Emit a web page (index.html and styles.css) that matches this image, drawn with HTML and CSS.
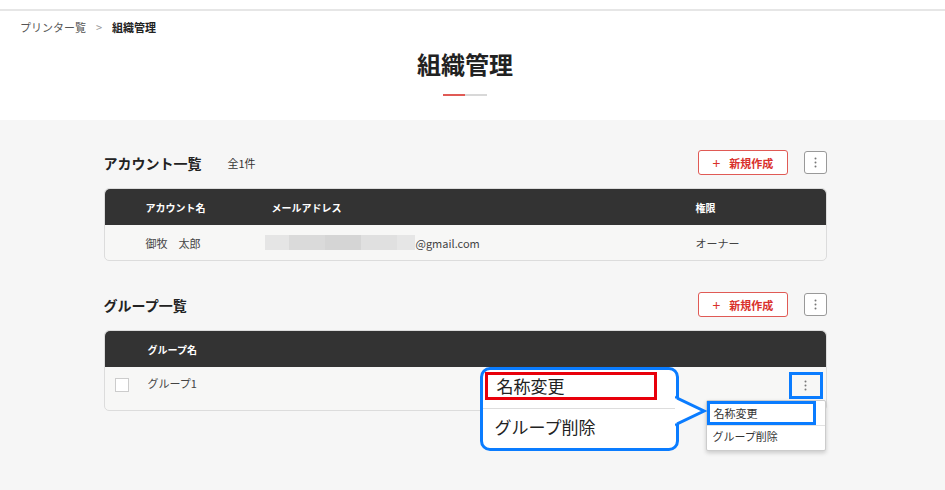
FILE: index.html
```html
<!DOCTYPE html>
<html>
<head>
<meta charset="utf-8">
<title>組織管理</title>
<link rel="stylesheet" href="styles.css">
</head>
<body>

<div class="topbar"></div>

<div class="header">
  <div class="crumbs">
    <a class="crumb" href="#">プリンター覧</a>
    <span class="sep">&gt;</span>
    <span class="crumb current">組織管理</span>
  </div>
  <h1 class="title">組織管理</h1>
  <div class="title-bar"><span class="red"></span><span class="gray"></span></div>
</div>

<div class="main">
  <div class="wrap">

    <div class="sec-head">
      <h2 class="sec-title">アカウント一覧</h2>
      <span class="count">全1件</span>
      <button class="btn-new"><span class="plus">+</span>新規作成</button>
      <button class="btn-more">
        <svg width="3" height="11" viewBox="0 0 3 11"><circle cx="1.5" cy="1.5" r="1" fill="#777"/><circle cx="1.5" cy="5.5" r="1" fill="#777"/><circle cx="1.5" cy="9.5" r="1" fill="#777"/></svg>
      </button>
    </div>

    <div class="table">
      <div class="thead acc-cols">
        <span>アカウント名</span>
        <span>メールアドレス</span>
        <span>権限</span>
      </div>
      <div class="trow acc-cols">
        <span>御牧　太郎</span>
        <span class="mail">
          <span class="blur">
            <i style="width:24px;background:#e5e5e5"></i><i style="width:36px;background:#dadada"></i><i style="width:36px;background:#d5d5d5"></i><i style="width:36px;background:#e0e0e0"></i><i style="width:18px;background:#e6e6e6"></i>
          </span>@gmail.com
        </span>
        <span>オーナー</span>
      </div>
    </div>

    <div class="sec-head second">
      <h2 class="sec-title">グループ一覧</h2>
      <button class="btn-new"><span class="plus">+</span>新規作成</button>
      <button class="btn-more">
        <svg width="3" height="11" viewBox="0 0 3 11"><circle cx="1.5" cy="1.5" r="1" fill="#777"/><circle cx="1.5" cy="5.5" r="1" fill="#777"/><circle cx="1.5" cy="9.5" r="1" fill="#777"/></svg>
      </button>
    </div>

    <div class="table group">
      <div class="thead grp-cols">
        <span></span>
        <span>グループ名</span>
      </div>
      <div class="trow grp-cols tall">
        <span class="check"></span>
        <span>グループ1</span>
        <span class="row-more">
          <svg width="3" height="11" viewBox="0 0 3 11"><circle cx="1.5" cy="1.5" r="1" fill="#777"/><circle cx="1.5" cy="5.5" r="1" fill="#777"/><circle cx="1.5" cy="9.5" r="1" fill="#777"/></svg>
        </span>
      </div>

      <div class="menu">
        <div class="menu-item hl">名称変更</div>
        <div class="menu-item">グループ削除</div>
      </div>

      <div class="callout">
        <div class="callout-item boxed">名称変更</div>
        <div class="callout-item">グループ削除</div>
        <svg class="callout-tail" width="32" height="34" viewBox="0 0 32 34">
          <path d="M0 3 L29 17 L0 31" fill="#fff" stroke="#0a7cff" stroke-width="3" stroke-linejoin="miter"/>
          <rect x="-2" y="4.5" width="3.5" height="25" fill="#fff"/>
        </svg>
      </div>
    </div>

  </div>
</div>

</body>
</html>
```

FILE: styles.css
```css
* { box-sizing: border-box; }

html, body { min-height: 100%; }
body { margin: 0; background: #f6f6f6; color: #333;
  font-family: "Noto Sans CJK JP", "Noto Sans", sans-serif; }

.topbar { height: 11px; background: #fff; border-bottom: 2px solid #e6e6e6; }

.header { background: #fff; height: 109px; }

.crumbs { display: flex; align-items: center; gap: 10px; padding: 8px 0 0 20px;
  font-size: 11px; height: 24px; }
.crumb { color: #555; text-decoration: none; }
.crumb.current { color: #222; font-weight: bold; }
.sep { color: #999; font-size: 11px; }

.header .title, .header .title-bar { width: 930px; }
.title { margin: 12px 0 0; text-align: center; font-size: 24px; line-height: 34px;
  font-weight: bold; color: #222; }

.title-bar { display: flex; justify-content: center; margin-top: 13px; }
.title-bar span { display: block; width: 22px; height: 2px; }
.title-bar .red { background: #e05a55; }
.title-bar .gray { background: #d8d8d8; }

.main { width: 930px; min-height: 370px; padding-bottom: 80px; }
.wrap { width: 723px; margin: 0 auto; padding-top: 30px; }

.sec-head { display: flex; align-items: center; height: 25px; }
.sec-head.second { margin-top: 31px; }
.sec-title { margin: 0; font-size: 14px; font-weight: bold; color: #222; }
.count { margin-left: 26px; font-size: 11px; color: #333; }

.btn-new { margin-left: auto; width: 90px; height: 25px; border: 1px solid #e05a55;
  border-radius: 3px; background: #fff; color: #d9302b; font: bold 11px "Noto Sans CJK JP", sans-serif;
  display: flex; align-items: center; padding: 0 0 0 14px; }
.btn-new .plus { font-weight: normal; font-size: 14px; margin-right: 9px; line-height: 1; }

.btn-more { margin-left: 16px; width: 23px; height: 23px; border: 1px solid #999;
  border-radius: 3px; background: #fff; display: flex; align-items: center;
  justify-content: center; padding: 0; }

.table { margin-top: 13px; border: 1px solid #dcdcdc; border-radius: 5px;
  background: #f7f7f6; position: relative; }

.thead { background: #333; color: #fff; font-size: 10px; font-weight: bold; height: 36px;
  border-radius: 5px 5px 0 0; align-items: center; }
.trow { height: 35px; font-size: 11px; color: #444; align-items: center; }
.trow.tall { height: 43px; align-items: flex-start; padding-top: 8px; }

.acc-cols { display: grid; grid-template-columns: 126px 424px 1fr; padding-left: 41px; }
.grp-cols { display: grid; grid-template-columns: 33px 1fr 40px; padding-left: 10px; }

.mail { display: flex; align-items: center; margin-left: -7px; }
.blur { display: flex; height: 15px; margin-right: 1px; }
.blur i { display: block; height: 15px; }

.check { width: 14px; height: 14px; border: 1px solid #ccc; background: #fff; margin-top: 3px; }

.row-more { width: 34px; height: 27px; border: 3px solid #0a7cff; display: flex;
  align-items: center; justify-content: center; margin-top: -3px; margin-left: 3px; }

.menu { position: absolute; left: 601px; top: 69px; width: 120px; background: #fff;
  border: 1px solid #ccc; border-radius: 2px; box-shadow: 0 2px 4px rgba(0,0,0,0.18);
  font-size: 11px; color: #333; z-index: 2; }
.menu-item { height: 25px; line-height: 21px; padding-left: 6px; }
.menu-item.hl { width: 109px; border: 3px solid #0a7cff; height: 24px; line-height: 18px; padding-left: 4px; }
.menu-item + .menu-item { border-top: 1px solid #e2e2e2; }

.callout { position: absolute; left: 375px; top: 36px; width: 199px; height: 84px;
  background: #fff; border: 3px solid #0a7cff; border-radius: 10px; z-index: 3; }
.callout-item { height: 40px; font-size: 17px; color: #222; padding-left: 12px; line-height: 36px; }
.callout-item.boxed { margin: 2px 19px 0 2px; height: 28px; line-height: 22px; border: 3px solid #e8000b; padding-left: 9px; }
.callout-item + .callout-item { border-top: 1px solid #ddd; margin-top: 8px; height: 42px; }
.callout-tail { position: absolute; right: -31px; top: 24px; }
```
